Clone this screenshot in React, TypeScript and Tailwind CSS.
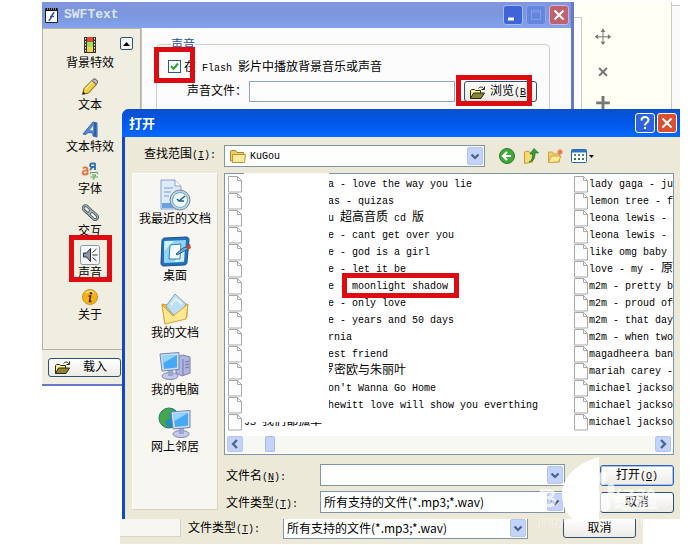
import type { ReactNode } from "react";

interface FileRow {
  name: string;
  // where the text begins, past the blanked-out part of the column
  pad: string;
}

const FAR = "pl-[84px]";

const LEFT_FILES: FileRow[] = [
  { name: "a - love the way you lie", pad: FAR },
  { name: "as - quizas", pad: FAR },
  { name: "u 超高音质 cd 版", pad: FAR },
  { name: "e - cant get over you", pad: FAR },
  { name: "e - god is a girl", pad: FAR },
  { name: "e - let it be", pad: FAR },
  { name: "e - moonlight shadow", pad: FAR },
  { name: "e - only love", pad: FAR },
  { name: "e - years and 50 days", pad: FAR },
  { name: "rnia", pad: FAR },
  { name: "est friend", pad: FAR },
  { name: "罗密欧与朱丽叶", pad: "pl-[78px]" },
  { name: "on't Wanna Go Home", pad: FAR },
  { name: "hewitt love will show you everthing", pad: FAR },
  { name: "JS 我们都孤单", pad: "pl-0" },
];

const RIGHT_FILES = [
  "lady gaga - ju",
  "lemon tree - f",
  "leona lewis -",
  "leona lewis -",
  "like omg baby",
  "love - my - 原",
  "m2m - pretty b",
  "m2m - proud of",
  "m2m - that day",
  "m2m - when two",
  "magadheera ban",
  "mariah carey -",
  "michael jackso",
  "michael jackso",
  "michael jackso",
];

// Half-width latin next to full-width Chinese; "&X" underlines the mnemonic X
function Label({ text }: { text: string }) {
  return (
    <>
      {text
        .split(/([^\x00-\x7f]+|&.)/)
        .filter(Boolean)
        .map((part, i) => {
          if (part[0] === "&") return <u key={i}>{part[1]}</u>;
          if (part.charCodeAt(0) > 127)
            return (
              <span key={i} className="text-[12px]">
                {part}
              </span>
            );
          return <span key={i}>{part}</span>;
        })}
    </>
  );
}

function FileIcon() {
  return (
    <svg width="14" height="17" viewBox="0 0 14 17" className="shrink-0" fill="#fdfdfd" stroke="#a8a8a8">
      <path d="M.5 .5h9l4 4v11.500H.5z" />
      <path d="M9.500 .5v4h4" fill="none" />
    </svg>
  );
}

function Chevron({ className = "" }: { className?: string }) {
  return (
    <svg viewBox="0 0 16 18" preserveAspectRatio="none" className={className}>
      <rect x=".5" y=".5" width="15" height="17" rx="1.500" fill="#c3d3fb" stroke="#b4c6ee" />
      <path d="M4.500 7.500 8 11l3.500-3.500" fill="none" stroke="#4d6185" strokeWidth="2.200" />
    </svg>
  );
}

function OpenFolder() {
  return (
    <svg width="17" height="14" viewBox="0 0 17 14" stroke="#2b2a12" strokeWidth="1">
      <path d="M1.500 12.500v-8l1-1h3l1 1h5v3" fill="#fbf3a0" />
      <path d="m1.500 12.500 3-5.500h11l-3.500 5.500z" fill="#8d8433" />
      <path d="M9.500 2.500c1.500-2 4-2 5.500.500M15.500 .5v3h-3" fill="none" />
    </svg>
  );
}

function PushButton({ children, className = "" }: { children: ReactNode; className?: string }) {
  return (
    <button
      type="button"
      className={`flex items-center justify-center rounded-[3px] border border-[#2f4f75] bg-linear-to-b from-white to-[#ecebe5] pt-[2px] leading-4 ${className}`}
    >
      {children}
    </button>
  );
}

function ComboBox({ id, label, options }: { id: string; label?: string; options: string[] }) {
  return (
    <div className="relative min-w-0 flex-1">
      <select
        id={id}
        aria-label={label}
        className="block h-[22px] w-full appearance-none border border-[#8096a8] bg-[#fdfffe] pl-[3px] font-['Noto_Sans_CJK_SC',sans-serif] text-[12px] leading-5"
      >
        {options.map((o) => (
          <option key={o}>{o}</option>
        ))}
      </select>
      <Chevron className="pointer-events-none absolute top-[2px] right-[2px] h-[18px] w-4" />
    </div>
  );
}

function Highlight({ className }: { className: string }) {
  return <div className={`pointer-events-none absolute z-30 border-5 border-[#dc0c12] ${className}`} />;
}

const TOOLS: { name: string; icon: ReactNode }[] = [
  {
    name: "背景特效",
    icon: (
      <svg width="14" height="18" viewBox="0 0 14 18">
        <rect x="1" y="1" width="12" height="16" fill="#3b2f2a" />
        <rect x="4" y="1" width="6" height="5" fill="#e0452f" />
        <rect x="4" y="6" width="6" height="5" fill="#a3e05a" />
        <rect x="4" y="11" width="6" height="5" fill="#ecd84b" />
        <path d="M2.500 2v14M11.500 2v14" stroke="#fff" strokeDasharray="1.500 1.500" />
      </svg>
    ),
  },
  {
    name: "文本",
    icon: (
      <svg width="18" height="18" viewBox="0 0 18 18" strokeLinejoin="round">
        <path d="m1.500 16.500 1.500-6L11 2.500l4.500 4L7.500 15z" fill="#f6cf3a" stroke="#7a5a12" />
        <path d="m11 2.500 1.500-1.500c1.500-.8 4.500 1.500 4 3.500l-1.500 2z" fill="#b9bcc0" stroke="#555" />
        <path d="m1.500 16.500.8-3 2.200 2z" fill="#222" />
        <path d="m4.500 11 7-7" stroke="#fff0a0" strokeWidth="1.500" />
      </svg>
    ),
  },
  {
    name: "文本特效",
    icon: (
      <svg width="17" height="17" viewBox="0 0 17 17" strokeLinejoin="round">
        <path d="M1 13 11 1l4 1v14l-4-1v-3l-5-.500-2 2z" fill="#5588d6" stroke="#3564b1" />
        <path d="m8 9 3-4v4.500z" fill="#f2f3ea" />
        <path d="M13 2v13" stroke="#274f99" strokeWidth="1.500" />
      </svg>
    ),
  },
  {
    name: "字体",
    icon: (
      <svg width="18" height="18" viewBox="0 0 18 18" fill="none" strokeWidth="1.800">
        <path d="M2 6.500c1-1.500 4.500-1.500 4.500 1v5M6.500 8.500c-6-.5-6 4-2.500 4 1.500 0 2.500-1 2.500-2" stroke="#e8713a" />
        <path d="M14 1v7M14 1.500h-3c-2.500 0-2.500 3.500 0 3.500h3M11.500 5 9 8" stroke="#2c71b8" />
        <path d="M9.500 12v-1.500h7V12M11 13h4l-2 1.500V17h-1.500M9.500 15h7.500" stroke="#58a65a" strokeWidth="1" />
      </svg>
    ),
  },
  {
    name: "交互",
    icon: (
      <svg width="18" height="18" viewBox="0 0 18 18" fill="none">
        <g transform="rotate(43 9 9)" stroke="#3e4c57" strokeWidth="2.600">
          <rect x="0" y="6" width="9" height="5" rx="2.500" />
          <rect x="8" y="6" width="10" height="5" rx="2.500" />
        </g>
        <g transform="rotate(43 9 9)" stroke="#b6c5d2" strokeWidth="1">
          <rect x="0" y="6" width="9" height="5" rx="2.500" />
          <rect x="8" y="6" width="10" height="5" rx="2.500" />
        </g>
      </svg>
    ),
  },
  {
    name: "声音",
    icon: (
      <svg width="20" height="20" viewBox="0 0 20 20">
        <rect x=".5" y=".5" width="19" height="19" rx="2" fill="#f7f8fa" stroke="#8798ac" />
        <path d="M3.500 8h3l4-4.500v13l-4-4.500h-3z" fill="#8e98ad" stroke="#262a3a" />
        <path d="M12.500 10h5M12.500 7.500 16.500 4M12.500 12.500l4 3.500" stroke="#333" />
      </svg>
    ),
  },
  {
    name: "关于",
    icon: (
      <svg width="16" height="16" viewBox="0 0 16 16">
        <circle cx="8" cy="8" r="7.500" fill="#f5b01c" stroke="#d68f14" />
        <path d="M4 4c2-2.500 6-2.500 8 0" stroke="#ffe08a" fill="none" strokeWidth="1.500" />
        <circle cx="9" cy="4.200" r="1.200" fill="#432c05" />
        <path d="M6.500 7h2l-1 5.500h2" fill="none" stroke="#432c05" strokeWidth="1.500" />
      </svg>
    ),
  },
];

function Monitor({ x, y }: { x: number; y: number }) {
  return (
    <g transform={`translate(${x} ${y})`}>
      <ellipse cx="11" cy="24" rx="8" ry="3.500" fill="#c6cae6" stroke="#8087b5" />
      <path d="M9 17h5v7H9z" fill="#9da5d2" />
      <path d="m1 2 19-1.500v17L3 19z" fill="#cfdcf4" stroke="#6d87bd" />
      <path d="m3.500 4 14.500-1v12.500L5 17z" fill="#45a9f3" />
      <path d="M3.500 4 18 3l-13.500 8z" fill="#93d5fc" />
    </g>
  );
}

const PLACES: { name: string; icon: ReactNode }[] = [
  {
    name: "我最近的文档",
    icon: (
      <svg width="32" height="32" viewBox="0 0 32 32">
        <path d="M2 1h14l6 6v23H2z" fill="#dfeafa" stroke="#86a3cf" />
        <path d="M16 1v6h6" fill="#fff" stroke="#86a3cf" />
        <path d="M5 9h9M5 13h7M5 17h5" stroke="#9bb8e3" strokeWidth="1.500" />
        <path d="M3 24h12v5H3z" fill="#6ba1e1" />
        <circle cx="21" cy="21" r="10" fill="#c3d2df" stroke="#76899b" />
        <circle cx="21" cy="21" r="7.500" fill="#edf8fc" stroke="#6bb0cf" />
        <path d="m26 17-6 5-2-2M20 22l5 0" stroke="#245e8c" strokeWidth="1.500" fill="none" />
      </svg>
    ),
  },
  {
    name: "桌面",
    icon: (
      <svg width="32" height="32" viewBox="0 0 32 32">
        <path d="M3 5c0-2 1-3 3-3l21-1c2 0 3 1 3 3l-2 22c0 2-1 3-3 3L5 30c-2 0-3-1-3-3z" fill="#2371bd" stroke="#18518d" />
        <path d="m5 5 22-1-2 22-20 1z" fill="#91d4f5" />
        <path d="M6 5h9L5 15zM25 13v12l-10 1z" fill="#d1f2fb" />
        <path d="m11 9 11-1-1 15H10z" fill="#f5fafd" stroke="#347eb7" />
        <path d="m17 18 7-6 4-1 1 2-4 2-7 4z" fill="#73b2df" stroke="#275d8d" />
        <path d="m27 10 4-2 1 4-3 2z" fill="#c84631" />
      </svg>
    ),
  },
  {
    name: "我的文档",
    icon: (
      <svg width="32" height="32" viewBox="0 0 32 32" strokeLinejoin="round">
        <path d="m3 11 11 2 14-2v13L6 31z" fill="#e9bd51" stroke="#c99b39" />
        <path d="m7 13 9-12 11 10-9 15z" fill="#bcdff5" stroke="#80a8c5" />
        <path d="m12 12 5-6 6 5" fill="none" stroke="#e9f7ff" strokeWidth="2" />
        <path d="m3 12 11 11 15-12-2 15L6 31z" fill="#ffe88f" stroke="#d0a441" />
      </svg>
    ),
  },
  {
    name: "我的电脑",
    icon: (
      <svg width="34" height="32" viewBox="0 0 34 32">
        <path d="m18 7 7-2 7 2v16l-8 3-6-3z" fill="#b0b5df" stroke="#777eb3" />
        <path d="M25 9v16M27 12l4-1M27 15l4-1M27 18l4-1" stroke="#7077aa" />
        <Monitor x={1} y={2} />
      </svg>
    ),
  },
  {
    name: "网上邻居",
    icon: (
      <svg width="34" height="32" viewBox="0 0 34 32">
        <circle cx="11" cy="11" r="10" fill="#2689c1" stroke="#287d56" />
        <path d="M3 6c4-6 9-5 12-3l-4 4 1 5-5 2 3 6C2 19 0 12 3 6z" fill="#42a84a" />
        <Monitor x={12} y={3} />
      </svg>
    ),
  },
];

function SwfTextWindow() {
  return (
    <section className="absolute top-[2px] right-[126px] left-[42px] flex h-[384px] flex-col border-r-3 border-b-2 border-[#6679cf] bg-[#f0eee1]">
      <header className="flex h-[26px] shrink-0 items-center bg-linear-to-b from-[#8196df] via-[#7b96de] to-[#82a3ec] pr-[2px] pl-[3px]">
        <svg width="13" height="16" viewBox="0 0 13 16">
          <path d="M.5 1.500h12v14H.5z" fill="#fff" stroke="#222" />
          <path d="M1 1h11v3H1z" fill="#111" />
          <path d="M2 2h9" stroke="#fff" strokeDasharray="1 1" />
          <path d="M9.500 5.500c-3 0-3 8-6 8M5 9.500h4" stroke="#3154a5" strokeWidth="1.500" fill="none" />
        </svg>
        <h1 className="ml-[6px] flex-1 font-['Liberation_Mono',monospace] text-[13px] font-bold text-[#dbe4fb]">
          SWFText
        </h1>
        <div className="flex gap-[3px]">
          <button type="button" aria-label="最小化" className="size-5 rounded-[3px] border border-[#a6baf1] bg-[#3e64d8]">
            <svg viewBox="0 0 18 18">
              <path d="M4 13h6" stroke="#fff" strokeWidth="3" />
            </svg>
          </button>
          <button type="button" aria-label="最大化" className="size-5 rounded-[3px] border border-[#8da6ea] bg-[#6586de]">
            <svg viewBox="0 0 18 18" fill="none" stroke="#839ee5">
              <path d="M4.500 4.500h9v9h-9zM4 6h10" />
            </svg>
          </button>
          <button type="button" aria-label="关闭" className="size-5 rounded-[3px] border border-[#c9b9da] bg-[#c0626d]">
            <svg viewBox="0 0 18 18" stroke="#fff" strokeWidth="2">
              <path d="m4.500 4.500 9 9M13.500 4.500l-9 9" />
            </svg>
          </button>
        </div>
      </header>

      <div className="flex min-h-0 flex-1">
        <nav className="relative w-[99px] shrink-0 border border-[#b5b3a8] pt-[5px] pr-[3px]">
          <ul>
            {TOOLS.map((t) => (
              <li key={t.name}>
                <button type="button" className="flex w-full flex-col items-center pb-1">
                  <span className="flex h-[22px] items-center">{t.icon}</span>
                  <span className="text-[12px] leading-4">{t.name}</span>
                </button>
              </li>
            ))}
          </ul>
          <button
            type="button"
            aria-label="向上"
            className="absolute top-2 right-[7px] flex size-[13px] items-center justify-center rounded-[2px] border border-[#315278] bg-[#f8f8f5]"
          >
            <svg width="7" height="4" viewBox="0 0 7 4">
              <path d="m0 4 3.500-4L7 4z" />
            </svg>
          </button>
        </nav>

        <div className="min-w-0 flex-1 border-l border-[#c8c6bc] bg-[#fcfcfc] px-[14px] pt-[6px]">
          <fieldset className="mr-[7px] h-[200px] rounded border border-[#d0d0c4]">
            <legend className="ml-[14px] pt-1 leading-4 text-[#264f94]">
              <Label text="声音" />
            </legend>
            <div className="mt-[5px] flex h-[13px] items-center pl-[11px]">
              <span className="relative flex size-[13px]">
                <input
                  id="play-sound"
                  type="checkbox"
                  defaultChecked
                  className="size-[13px] appearance-none border border-[#2f5a7e] bg-white"
                />
                <svg viewBox="0 0 13 13" className="pointer-events-none absolute inset-0" fill="none">
                  <path d="m3 6 2.500 3L10 3.500" stroke="#2ba52c" strokeWidth="2" />
                </svg>
              </span>
              <label htmlFor="play-sound" className="ml-[3px] pt-1 leading-4 whitespace-nowrap">
                <Label text="在 Flash 影片中播放背景音乐或声音" />
              </label>
            </div>
          </fieldset>
        </div>
      </div>

      <div className="flex h-[34px] shrink-0 items-center pl-[6px]">
        <PushButton className="h-[19px] w-[73px] gap-3 pr-2">
          <OpenFolder />
          <Label text="载入" />
        </PushButton>
      </div>

      {/* sound file row, drawn over the group frame */}
      <div className="absolute top-[79px] right-[34px] left-[145px] flex h-[21px] items-center">
        <label htmlFor="sound-file" className="w-[62px] shrink-0 pt-[2px] leading-4 whitespace-nowrap">
          <Label text="声音文件：" />
        </label>
        <input id="sound-file" className="h-[21px] min-w-0 flex-1 border border-[#8ca3b8] bg-[#fdfdfd] px-1" />
        <PushButton className="ml-[9px] h-[21px] w-[73px] gap-1">
          <OpenFolder />
          <span>
            <Label text="浏览(&B)" />
          </span>
        </PushButton>
      </div>

      <Highlight className="top-[45px] left-[112px] h-[36px] w-[41px]" />
      <Highlight className="top-[73px] right-[39px] h-[31px] w-[76px]" />
      <Highlight className="top-[233px] left-[27px] h-[47px] w-[43px]" />
    </section>
  );
}

function CanvasStrip() {
  return (
    <aside className="absolute top-[2px] right-5 flex h-[108px] w-[106px] bg-[#fffff5]">
      <div className="mt-[15px] w-2 border-t border-r border-[#c9c9c9] bg-white" />
      <div className="flex flex-1 flex-col items-center pt-[26px] pr-[47px]">
        <svg width="18" height="18" viewBox="0 0 18 18" fill="#777" stroke="#777">
          <path d="M9 2v14M2 9h14" />
          <path d="M9 .5 6.500 4h5zM9 17.500 6.500 14h5zM.5 9 4 6.500v5zM17.500 9 14 6.500v5z" stroke="none" />
        </svg>
        <svg width="12" height="12" viewBox="0 0 12 12" className="mt-5" stroke="#777" strokeWidth="2">
          <path d="m2 2 8 8M10 2l-8 8" />
        </svg>
        <svg width="14" height="14" viewBox="0 0 14 14" className="mt-[19px]" stroke="#777" strokeWidth="3">
          <path d="M7 0v14M0 7h14" />
        </svg>
      </div>
      <div className="w-[9px] border-l border-[#c9c9c9] bg-[#fafafa]">
        <div className="h-[4px] border-b border-[#c9c9c9] bg-white" />
      </div>
    </aside>
  );
}

function FolderToolbar() {
  return (
    <div className="flex w-[189px] shrink-0 items-center gap-2 pl-[14px]">
      <button type="button" aria-label="后退">
        <svg width="16" height="16" viewBox="0 0 16 16">
          <circle cx="8" cy="8" r="7.500" fill="#42a83a" stroke="#267e2c" />
          <path d="M12 8H4.500M8 4 4 8l4 4" stroke="#fff" strokeWidth="2.200" fill="none" />
        </svg>
      </button>
      <button type="button" aria-label="向上一级">
        <svg width="16" height="16" viewBox="0 0 16 16">
          <path d="m1.500 4 4-1 1 1.500 5-.500-2 10-8 1.500z" fill="#f6dc76" stroke="#c49a36" />
          <path d="M6 14c3-1 3.500-4 3.500-8H7l4-5.500L15.500 5H12c0 5-1 8-6 9z" fill="#35a13a" stroke="#206b25" strokeWidth=".7" />
        </svg>
      </button>
      <button type="button" aria-label="新建文件夹">
        <svg width="16" height="16" viewBox="0 0 16 16">
          <path d="M1.500 14.500V4h4l1 2h6v8z" fill="#f3cf68" stroke="#d2a345" />
          <path d="M1.500 14.500 4 8h10l-2.500 6z" fill="#ffe999" stroke="#d2a345" />
          <path d="M13 1v6M10 4h6M11 2l4 4M15 2l-4 4" stroke="#e7602e" />
        </svg>
      </button>
      <button type="button" aria-label="查看" className="flex items-center gap-[2px]">
        <svg width="16" height="14" viewBox="0 0 16 14">
          <rect x=".5" y=".5" width="15" height="13" rx="1" fill="#fff" stroke="#2a65ac" />
          <path d="M1 2h14" stroke="#2f73c4" strokeWidth="3" />
          <path d="M3 6h2M7 6h2M11 6h2" stroke="#587fad" strokeWidth="2" />
          <path d="M3 10h2M7 10h2M11 10h2" stroke="#3a7350" strokeWidth="2" />
        </svg>
        <svg width="5" height="3" viewBox="0 0 5 3">
          <path d="M0 0h5L2.500 3z" />
        </svg>
      </button>
    </div>
  );
}

function FileList() {
  return (
    <div className="relative border border-[#8096a8] bg-white">
      <div className="flex pt-[2px] pl-[3px]">
        <ul className="w-[346px] shrink-0">
          {LEFT_FILES.map((f) => (
            <li key={f.name} className="flex h-[17px] items-center">
              <FileIcon />
              <span className={`ml-[2px] leading-[17px] whitespace-pre ${f.pad}`}>
                <Label text={f.name} />
              </span>
            </li>
          ))}
        </ul>
        <ul className="min-w-0 flex-1 overflow-hidden">
          {RIGHT_FILES.map((name, i) => (
            <li key={i} className="flex h-[17px] items-center">
              <FileIcon />
              <span className="ml-px leading-[17px] whitespace-pre">
                <Label text={name} />
              </span>
            </li>
          ))}
        </ul>
      </div>
      <div className="absolute -top-px left-[19px] h-[249px] w-[85px] bg-white" />

      {/* horizontal scrollbar */}
      <div className="mx-[2px] mt-[5px] mb-px flex h-[17px] justify-between bg-[#f8f8f3]">
        <div className="flex gap-[22px]">
          <button type="button" aria-label="向左滚动" className="size-4 rounded-[2px] border border-[#b4c6ee] bg-[#c3d3fb]">
            <svg viewBox="0 0 14 14" fill="none" stroke="#4d6185" strokeWidth="2.200">
              <path d="M9 3 5 7l4 4" />
            </svg>
          </button>
          <div className="h-4 w-[10px] rounded-[2px] border border-[#a5b9e8] bg-[#c3d3fb]" />
        </div>
        <button type="button" aria-label="向右滚动" className="size-4 rounded-[2px] border border-[#b4c6ee] bg-[#c3d3fb]">
          <svg viewBox="0 0 14 14" fill="none" stroke="#4d6185" strokeWidth="2.200">
            <path d="m5 3 4 4-4 4" />
          </svg>
        </button>
      </div>
      <Highlight className="top-[99px] left-[117px] h-[25px] w-[117px]" />
    </div>
  );
}

function OpenDialog() {
  return (
    <section className="relative z-10 mr-5 ml-[122px] rounded-tl-[7px] border-l-3 border-[#1148c4] bg-[#ece9d8]">
      <header className="-ml-[3px] flex h-7 items-center justify-between rounded-tl-[7px] bg-linear-to-b from-[#0a50cf] via-[#0058e8] to-[#0569ff] pr-[3px] pl-[7px]">
        <h2 className="pt-[3px] font-bold text-white">
          <span className="text-[13px]">打开</span>
        </h2>
        <div className="flex gap-[2px]">
          <button type="button" aria-label="帮助" className="size-5 rounded-[3px] border border-white bg-[#2f63dc]">
            <svg viewBox="0 0 18 18" fill="none" stroke="#fff" strokeWidth="2">
              <path d="M5.500 6.500c0-4.500 7-4.500 7-.500 0 2.500-3.500 2.500-3.500 5.500M9 13v2" />
            </svg>
          </button>
          <button type="button" aria-label="关闭" className="size-5 rounded-[3px] border border-white bg-[#dc4e2f]">
            <svg viewBox="0 0 18 18" stroke="#fff" strokeWidth="2">
              <path d="m4.500 4.500 9 9M13.500 4.500l-9 9" />
            </svg>
          </button>
        </div>
      </header>

      <div className="pt-2 pr-[6px] pb-[6px] pl-[7px]">
        <div className="flex">
          <label htmlFor="look-in" className="w-[92px] shrink-0 pl-3 leading-5 whitespace-nowrap">
            <Label text="查找范围(&I):" />
          </label>
          <div className="relative min-w-0 flex-1">
            <select
              id="look-in"
              className="block h-[22px] w-full appearance-none border border-[#8096a8] bg-[#fdfffe] pl-[25px] font-['Liberation_Mono',monospace] text-[10px]"
            >
              <option>KuGou</option>
            </select>
            <svg viewBox="0 0 16 13" className="pointer-events-none absolute top-[5px] left-[6px] h-[13px] w-4">
              <path d="M.5 11V2l1-1.500h4l1.500 2h6.500V11z" fill="#f3cf5c" stroke="#a88532" />
              <path d="M2.500 4.500h13l-1 8h-12z" fill="#ffeb9b" stroke="#b8953c" />
            </svg>
            <Chevron className="pointer-events-none absolute top-[2px] right-[2px] h-[18px] w-4" />
          </div>
          <FolderToolbar />
        </div>

        <div className="mt-[6px] flex gap-[6px]">
          <nav className="mb-[3px] w-[86px] shrink-0 border border-[#fdfcf9] border-r-[#d8d4c4] border-b-[#d8d4c4] bg-[#f8f6f1] pt-[5px]">
            <ul>
              {PLACES.map((p) => (
                <li key={p.name}>
                  <button type="button" className="flex w-full flex-col items-center pb-[7px]">
                    {p.icon}
                    <span className="text-[12px] leading-[18px] whitespace-nowrap">{p.name}</span>
                  </button>
                </li>
              ))}
            </ul>
          </nav>

          <div className="min-w-0 flex-1">
            <FileList />
            <form className="mt-[9px] space-y-[5px]">
              <div className="flex items-center">
                <label htmlFor="file-name" className="w-24 shrink-0 pt-1 pl-[2px] leading-4">
                  <Label text="文件名(&N):" />
                </label>
                <div className="relative min-w-0 flex-1">
                  <input id="file-name" className="block h-[22px] w-full border border-[#8096a8] bg-[#fdfffe] px-1" />
                  <Chevron className="pointer-events-none absolute top-[2px] right-[2px] h-[18px] w-4" />
                </div>
                <PushButton className="ml-[35px] h-[21px] w-[74px] border-[#2f62b5] inset-shadow-[0_0_0_1px_#a9c4f0]">
                  <span>
                    <Label text="打开(&O)" />
                  </span>
                </PushButton>
              </div>
              <div className="flex items-center">
                <label htmlFor="file-type" className="w-24 shrink-0 pt-1 pl-[2px] leading-4">
                  <Label text="文件类型(&T):" />
                </label>
                <ComboBox id="file-type" options={["所有支持的文件(*.mp3;*.wav)"]} />
                <PushButton className="ml-[35px] h-[21px] w-[74px]">
                  <Label text="取消" />
                </PushButton>
              </div>
            </form>
          </div>
        </div>
      </div>
    </section>
  );
}

// Bottom edge of the dialog underneath
function DialogRemnant() {
  return (
    <section className="relative z-10 mr-[57px] ml-[120px] flex h-[25px] items-start overflow-hidden bg-[#ece9d8]">
      <div className="h-[18px] w-[61px] shrink-0 border-r border-b border-[#d8d4c4] bg-[#f8f6f1]" />
      <label htmlFor="file-type-below" className="w-[102px] shrink-0 pt-[2px] pl-[7px] leading-4">
        <Label text="文件类型(&T):" />
      </label>
      <div className="-mt-[2px] flex flex-1">
        <ComboBox id="file-type-below" options={["所有支持的文件(*.mp3;*.wav)"]} />
      </div>
      <PushButton className="-mt-[2px] mr-[7px] ml-[35px] h-[21px] w-[73px]">
        <Label text="取消" />
      </PushButton>
    </section>
  );
}

function Watermark() {
  return (
    <div className="pointer-events-none absolute top-[456px] right-[20px] z-20 h-[80px] w-[142px] font-['Liberation_Sans',sans-serif] text-white/70">
      <svg width="142" height="80" viewBox="0 0 142 80">
        <path d="M61 1C38 7 24 22 24 38c0 13 5 21 13 27h24z" fill="#fff" />
        <g fill="#fff" fillOpacity=".7">
          <ellipse cx="65" cy="22" rx="4" ry="7" />
          <ellipse cx="73" cy="33" rx="4" ry="6" />
          <path d="M61 36c7 2 13 10 11 16-2 5-7 3-11 3z" />
        </g>
      </svg>
      <span className="absolute top-[29px] left-0 text-[26px] leading-[26px] font-bold">B</span>
      <span className="absolute top-[29px] left-[76px] font-['Noto_Sans_CJK_SC',sans-serif] text-[22px] leading-[24px] font-bold">
        经验
      </span>
      <span className="absolute top-[57px] left-0 text-[13px] leading-4 text-white/40">jingyan.baidu.com</span>
    </div>
  );
}

export default function App() {
  return (
    <main className="relative min-h-screen overflow-hidden bg-white pt-[109px] font-['Liberation_Mono','Noto_Sans_CJK_SC',monospace] text-[10px] text-black">
      <CanvasStrip />
      <SwfTextWindow />
      <OpenDialog />
      <DialogRemnant />
      <Watermark />
    </main>
  );
}
